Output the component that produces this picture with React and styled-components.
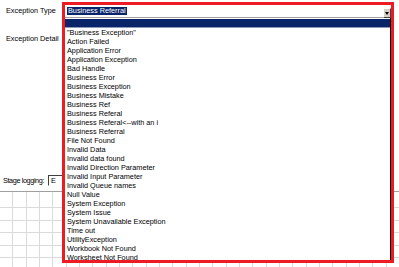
import styled, { createGlobalStyle } from 'styled-components';

const GlobalStyle = createGlobalStyle`
  html, body {
    margin: 0;
    padding: 0;
    background: #fff;
  }
  body {
    font-family: "Liberation Sans", Arial, sans-serif;
    font-size: 7.3px;
    color: #000;
  }
`;

const Page = styled.div`
  position: relative;
  width: 399px;
  height: 267px;
  overflow: hidden;
  background: #fff;
  color: #000;
`;

const Form = styled.div`
  display: flex;
  flex-direction: column;
`;

const FieldRow = styled.div`
  display: flex;
  align-items: flex-start;
  margin-top: ${(p) => p.$top}px;
  padding-left: ${(p) => p.$indent}px;
`;

const Label = styled.span`
  width: ${(p) => p.$w}px;
  line-height: ${(p) => p.$lh}px;
  letter-spacing: ${(p) => (p.$tight ? '-0.4px' : '0')};
  white-space: nowrap;
  color: #000;
`;

const Combo = styled.div`
  box-sizing: border-box;
  display: flex;
  align-items: flex-start;
  justify-content: space-between;
  width: 329px;
  height: 15px;
  padding: 3px 0 0 3px;
  background: #fff;
  border: 1px solid #808080;
  border-bottom-color: #a0a0a0;
  border-right: none;
`;

const SelectedText = styled.span`
  background: #0a246a;
  color: #fff;
  line-height: 8px;
  padding: 0 1px;
  margin-left: 1px;
`;

const DropButton = styled.div`
  box-sizing: border-box;
  display: flex;
  align-items: center;
  justify-content: center;
  width: 8px;
  height: 10px;
  margin-top: 1px;
  background: #d4d0c8;
  border: 1px solid;
  border-color: #fff #404040 #404040 #fff;
`;

const Arrow = styled.span`
  width: 0;
  height: 0;
  border-left: 2.5px solid transparent;
  border-right: 2.5px solid transparent;
  border-top: 3px solid #000;
`;

const SunkenField = styled.div`
  box-sizing: border-box;
  width: 20px;
  height: 11px;
  padding-left: 2px;
  line-height: 9px;
  background: #fff;
  border: 1px solid;
  border-color: #404040 #fff #fff #404040;
`;

const Grid = styled.div`
  margin-top: 5px;
  border-top: 1px solid #a0a0a0;
  display: grid;
  grid-template-columns: repeat(30, 13.33px);
  grid-template-rows: 16px;
  grid-auto-rows: 12.6px;
`;

const Cell = styled.div`
  box-sizing: border-box;
  border-right: 1px solid #dadada;
  border-bottom: 1px solid #dadada;
`;

const DropList = styled.div`
  position: absolute;
  left: 62px;
  top: 18px;
  width: 329px;
  height: 244px;
  box-sizing: border-box;
  overflow: hidden;
  background: #fff;
  border: 1px solid #000;
  border-top: none;
`;

const ListItem = styled.div`
  line-height: 9px;
  padding-left: 4px;
  white-space: nowrap;
  color: #000;
  background: ${(p) => (p.$active ? '#0a246a' : 'transparent')};
  border-bottom: ${(p) => (p.$active ? '1px solid #8e98bc' : 'none')};
  margin-top: ${(p) => (p.$active ? '1px' : '0')};
  height: ${(p) => (p.$active ? '8px' : '9px')};
`;

const RedFrame = styled.div`
  position: absolute;
  left: 62px;
  top: 2px;
  width: 332px;
  height: 261px;
  box-sizing: border-box;
  border: 3px solid #ed1c24;
  pointer-events: none;
`;

const exceptionTypes = [
  '"Business Exception"',
  'Action Failed',
  'Application Error',
  'Application Exception',
  'Bad Handle',
  'Business Error',
  'Business Exception',
  'Business Mistake',
  'Business Ref',
  'Business Referal',
  'Business Referal<--with an i',
  'Business Referral',
  'File Not Found',
  'Invalid Data',
  'Invalid data found',
  'Invalid Direction Parameter',
  'Invalid Input Parameter',
  'Invalid Queue names',
  'Null Value',
  'System Exception',
  'System Issue',
  'System Unavailable Exception',
  'Time out',
  'UtilityException',
  'Workbook Not Found',
  'Worksheet Not Found',
];

const cells = Array.from({ length: 30 * 7 });

const App = () => {
  return (
    <>
      <GlobalStyle />
      <Page>
        <Form>
          <FieldRow $top={3} $indent={6}>
            <Label $w={56} $lh={15}>Exception Type</Label>
            <Combo>
              <SelectedText>Business Referral</SelectedText>
              <DropButton>
                <Arrow />
              </DropButton>
            </Combo>
          </FieldRow>
          <FieldRow $top={16} $indent={6}>
            <Label $w={56} $lh={10}>Exception Detail</Label>
          </FieldRow>
          <FieldRow $top={131} $indent={3}>
            <Label $w={45} $lh={11} $tight>Stage logging:</Label>
            <SunkenField>E</SunkenField>
          </FieldRow>
          <Grid>
            {cells.map((_, i) => (
              <Cell key={i} />
            ))}
          </Grid>
        </Form>
        <DropList>
          <ListItem $active />
          {exceptionTypes.map((t) => (
            <ListItem key={t}>{t}</ListItem>
          ))}
        </DropList>
        <RedFrame />
      </Page>
    </>
  );
};

export default App;
